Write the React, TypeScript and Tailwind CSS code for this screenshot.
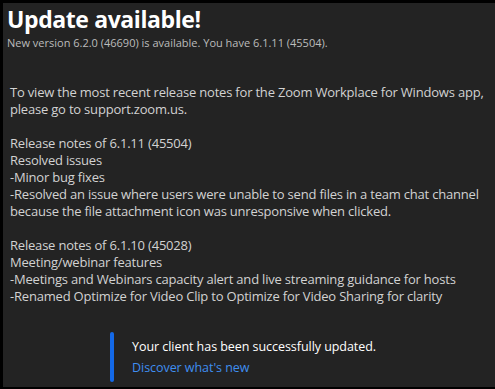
import React from "react";

const font = { fontFamily: '"Open Sans", "Noto Sans", sans-serif' };

const App: React.FC = () => {
  return (
    <div
      className="w-[495px] h-[389px] bg-black pt-[3px] pl-[3px] pb-[2px] overflow-hidden"
      style={font}
    >
      <div className="h-full bg-[#232323] flex flex-col">
        <div className="pl-[4px] pt-[1px]">
          <h1 className="text-[23px] leading-[30px] font-bold text-white tracking-[-0.4px]">
            Update available!
          </h1>
          <p className="text-[11px] leading-[14px] text-[#bcbcbc] mt-[2px]">
            New version 6.2.0 (46690) is available. You have 6.1.11 (45504).
          </p>
        </div>

        <div className="pl-[7px] pr-2 mt-[34px] text-[13px] leading-[17px] text-[#d2d2d2] tracking-[-0.2px]">
          <p>
            To view the most recent release notes for the Zoom Workplace for Windows app,
            <br />
            please go to support.zoom.us.
          </p>
          <p className="mt-[17px]">Release notes of 6.1.11 (45504)</p>
          <p>Resolved issues</p>
          <p>-Minor bug fixes</p>
          <p>-Resolved an issue where users were unable to send files in a team chat channel</p>
          <p>because the file attachment icon was unresponsive when clicked.</p>
          <p className="mt-[17px]">Release notes of 6.1.10 (45028)</p>
          <p>Meeting/webinar features</p>
          <p>-Meetings and Webinars capacity alert and live streaming guidance for hosts</p>
          <p>-Renamed Optimize for Video Clip to Optimize for Video Sharing for clarity</p>
        </div>

        <div className="flex items-stretch gap-[18px] ml-[107px] mt-[27px]">
          <div className="w-[4px] h-[50px] rounded-full bg-[#1469e8]" />
          <div className="flex flex-col justify-center gap-[4px] text-[12.5px] leading-[17px] tracking-[-0.05px]">
            <span className="text-white">Your client has been successfully updated.</span>
            <span className="text-[#3f8ef0]">Discover what's new</span>
          </div>
        </div>
      </div>
    </div>
  );
};

export default App;
